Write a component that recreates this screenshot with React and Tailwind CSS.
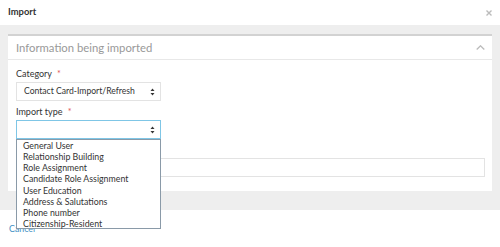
import React from "react";

function Arrows() {
  return (
    <svg width="5" height="8" viewBox="0 0 5 8" className="shrink-0">
      <path d="M2.5 0.5 L4.5 3 L0.5 3 Z" fill="#333" />
      <path d="M2.5 7.5 L4.5 5 L0.5 5 Z" fill="#333" />
    </svg>
  );
}

export default function App() {
  const options = [
    "General User",
    "Relationship Building",
    "Role Assignment",
    "Candidate Role Assignment",
    "User Education",
    "Address & Salutations",
    "Phone number",
    "Citizenship-Resident",
  ];
  return (
    <div className="w-[500px] h-[247px] bg-white relative overflow-hidden font-['Lato',sans-serif] text-[#333]">
      <div className="h-[25px] flex items-center justify-between pl-2 pr-[8px]">
        <span className="text-[9.4px] font-bold">Import</span>
        <svg width="6" height="6" viewBox="0 0 6 6">
          <path d="M0.5 0.5 L5.5 5.5 M5.5 0.5 L0.5 5.5" stroke="#bbb" strokeWidth="1.4" />
        </svg>
      </div>
      <div className="bg-[#eeeeee] px-2 pt-[9px] pb-[19px]">
        <div className="bg-white border-t-2 border-[#d2d2d2]">
          <div className="h-[24px] border-b border-[#e8e8e8] flex items-center justify-between pl-2 pr-[7px]">
            <span className="text-[11.3px] font-normal text-[#999] leading-none pt-[1px]">Information being imported</span>
            <svg width="9" height="5" viewBox="0 0 9 5">
              <path d="M0.7 4.5 L4.5 0.8 L8.3 4.5" stroke="#bbb" strokeWidth="1.3" fill="none" />
            </svg>
          </div>
          <div className="px-2 pt-[8px] pb-[14px]">
            <div className="text-[9px] leading-[12px] mb-[2px]">
              Category <span className="text-[#e05555] ml-[3px]">*</span>
            </div>
            <div className="w-[145px] h-[19px] border border-[#e3e3e3] flex items-center justify-between pl-[7px] pr-[5px] text-[8.6px]">
              <span>Contact Card-Import/Refresh</span>
              <Arrows />
            </div>
            <div className="text-[9px] leading-[12px] mt-[5px] mb-[2px]">
              Import type <span className="text-[#e05555] ml-[3px]">*</span>
            </div>
            <div className="relative w-[145px]">
              <div className="w-[145px] h-[19px] border border-[#7fc6e6] flex items-center justify-end pr-[5px]">
                <Arrows />
              </div>
              <div className="absolute left-0 top-[19px] w-[145px] h-[90px] bg-white border border-[#8a9aa8] z-10 pl-[6px]">
                {options.map((o) => (
                  <div key={o} className="text-[8.8px] leading-[11.15px] whitespace-nowrap">
                    {o}
                  </div>
                ))}
              </div>
            </div>
            <div className="mt-[19px] h-[19px] w-[469px] border border-[#e3e3e3]"></div>
          </div>
        </div>
      </div>
      <div className="pl-[9px] pt-[15px] text-[8.8px] text-[#3d8fc4] leading-none">Cancel</div>
    </div>
  );
}
